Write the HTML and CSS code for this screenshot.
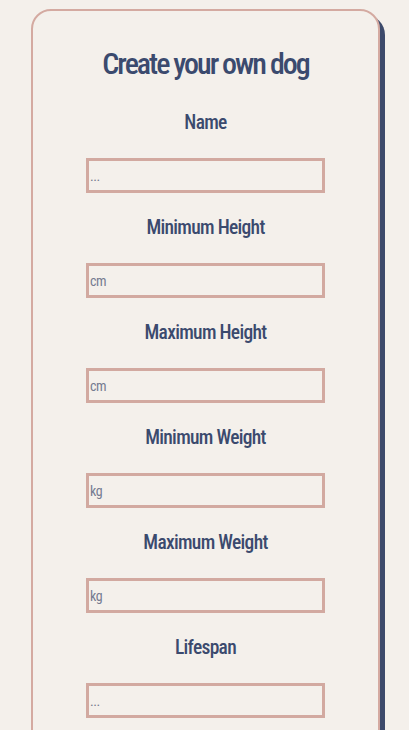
FILE: index.html
```html
<!DOCTYPE html>
<html lang="en">
<head>
<meta charset="utf-8">
<title>Create your own dog</title>
<link rel="stylesheet" href="styles.css">
</head>
<body>
<main class="card">
  <h1 class="title">Create your own dog</h1>
  <form class="form">
    <label class="field"><span class="label">Name</span><input class="input" type="text" placeholder="..."></label>
    <label class="field"><span class="label">Minimum Height</span><input class="input" type="text" placeholder="cm"></label>
    <label class="field"><span class="label">Maximum Height</span><input class="input" type="text" placeholder="cm"></label>
    <label class="field"><span class="label">Minimum Weight</span><input class="input" type="text" placeholder="kg"></label>
    <label class="field"><span class="label">Maximum Weight</span><input class="input" type="text" placeholder="kg"></label>
    <label class="field"><span class="label">Lifespan</span><input class="input" type="text" placeholder="..."></label>
  </form>
</main>
</body>
</html>
```
FILE: styles.css
```css
html, body {
  margin: 0;
  padding: 0;
  background: #f4f0eb;
  height: 730px;
  overflow: hidden;
}
body {
  font-family: "Roboto Condensed", "Open Sans Condensed", Roboto, "DejaVu Sans Condensed", sans-serif;
  font-stretch: 75%;
  color: #3b4a6e;
}
.card {
  box-sizing: border-box;
  width: 349px;
  margin: 9px 0 0 31px;
  min-height: 900px;
  border: 2px solid #d4aaa1;
  border-radius: 20px;
  box-shadow: 5px 6px 0 #3d4a6b;
  background: #f4f0eb;
  padding-top: 33px;
  display: flex;
  flex-direction: column;
  align-items: center;
}
.title {
  margin: 0;
  font-size: 30px;
  line-height: 40px;
  font-weight: 500;
  letter-spacing: -2px;
}
.form {
  margin-top: 27px;
  display: flex;
  flex-direction: column;
  align-items: center;
}
.field {
  display: flex;
  flex-direction: column;
  align-items: center;
  margin-bottom: 23px;
}
.label {
  font-size: 19.5px;
  line-height: 24px;
  font-weight: 500;
  letter-spacing: -0.7px;
  margin-bottom: 23px;
}
.input {
  box-sizing: border-box;
  width: 239px;
  height: 35px;
  border: 3px solid #d2a9a0;
  background: #f4f0eb;
  padding: 0 0 0 1px;
  font-family: inherit;
  font-size: 14px;
  letter-spacing: -0.5px;
  color: #3b4a6e;
  outline: none;
}
.input::placeholder {
  color: #757b90;
}
```
